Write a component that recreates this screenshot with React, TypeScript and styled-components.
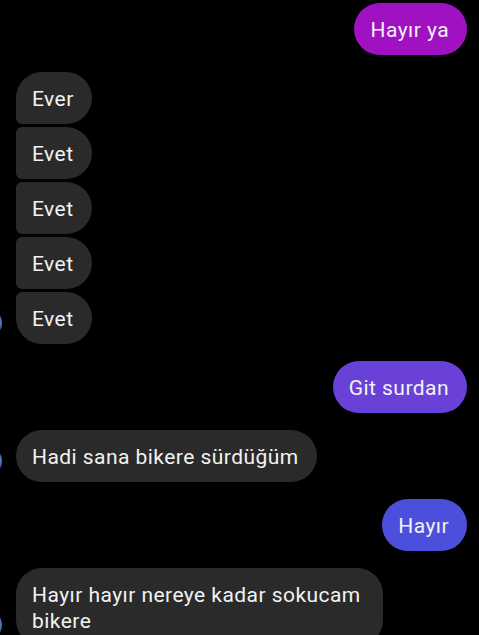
import React from "react";
import styled, { createGlobalStyle, css } from "styled-components";

const Global = createGlobalStyle`
  html, body {
    margin: 0;
    padding: 0;
    background: #000;
    overflow: hidden;
  }
  body {
    font-family: Roboto, "Noto Sans", Arial, sans-serif;
  }
`;

const Screen = styled.div`
  width: 479px;
  height: 635px;
  background: #000;
  overflow: hidden;
  box-sizing: border-box;
  padding: 3px 12px 0 0;
  display: flex;
  flex-direction: column;
  gap: 17px;
`;

const Group = styled.div`
  display: flex;
  flex-direction: column;
  gap: 3px;
`;

const Row = styled.div<{ $sent?: boolean }>`
  display: flex;
  align-items: flex-end;
  justify-content: ${(p) => (p.$sent ? "flex-end" : "flex-start")};
  gap: 14px;
`;

const Avatar = styled.div<{ $hidden?: boolean }>`
  flex: none;
  width: 30px;
  height: 30px;
  margin-left: -28px;
  margin-bottom: 6px;
  border-radius: 50%;
  background: radial-gradient(circle at 85% 45%, #5f7fc4 0%, #35508f 45%, #1a2850 100%);
  visibility: ${(p) => (p.$hidden ? "hidden" : "visible")};
`;

type Pos = "single" | "first" | "middle" | "last";

const Bubble = styled.div<{ $bg: string; $pos?: Pos; $max?: number }>`
  box-sizing: border-box;
  padding: 14px 18px 12px 16px;
  font-size: 21px;
  letter-spacing: 0.45px;
  line-height: 26px;
  color: #f2f2f2;
  background: ${(p) => p.$bg};
  border-radius: 26px;
  max-width: ${(p) => (p.$max ? `${p.$max}px` : "none")};
  ${(p) =>
    p.$pos === "first" &&
    css`
      border-bottom-left-radius: 6px;
    `}
  ${(p) =>
    p.$pos === "middle" &&
    css`
      border-top-left-radius: 6px;
      border-bottom-left-radius: 6px;
    `}
  ${(p) =>
    p.$pos === "last" &&
    css`
      border-top-left-radius: 6px;
    `}
`;

const GRAY = "#2a2a2a";

const Received: React.FC<{ text: string; pos?: Pos; avatar?: boolean; max?: number }> = ({
  text,
  pos = "single",
  avatar,
  max,
}) => (
  <Row>
    <Avatar $hidden={!avatar} />
    <Bubble $bg={GRAY} $pos={pos} $max={max}>
      {text}
    </Bubble>
  </Row>
);

const Sent: React.FC<{ text: string; bg: string }> = ({ text, bg }) => (
  <Row $sent>
    <Bubble $bg={bg}>{text}</Bubble>
  </Row>
);

export default function App() {
  return (
    <>
      <Global />
      <Screen>
        <Sent text="Hayır ya" bg="#a011c2" />
        <Group>
          <Received text="Ever" pos="first" />
          <Received text="Evet" pos="middle" />
          <Received text="Evet" pos="middle" />
          <Received text="Evet" pos="middle" />
          <Received text="Evet" pos="last" avatar />
        </Group>
        <Sent text="Git surdan" bg="#6a41d8" />
        <Received text="Hadi sana bikere sürdüğüm" avatar />
        <Sent text="Hayır" bg="#4c4fdb" />
        <Received text="Hayır hayır nereye kadar sokucam bikere" avatar max={367} />
      </Screen>
    </>
  );
}
